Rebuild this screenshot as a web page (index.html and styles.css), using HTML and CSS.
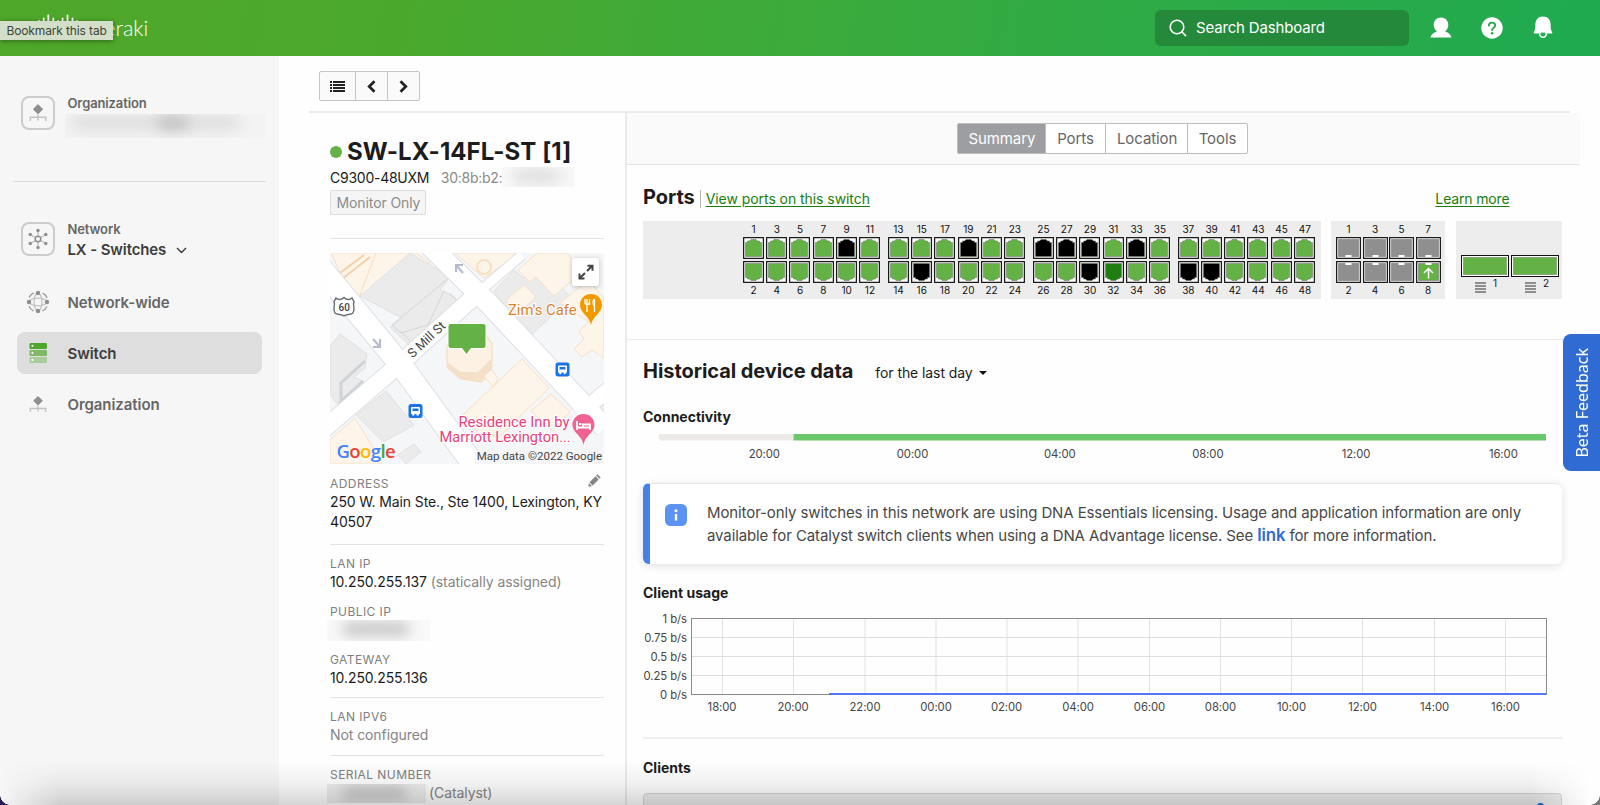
FILE: index.html
```html
<!DOCTYPE html>
<html lang="en">
<head>
<meta charset="utf-8">
<title>SW-LX-14FL-ST [1] - Meraki Dashboard</title>
<link rel="stylesheet" href="styles.css">
</head>
<body>
<header class="topbar">
  <div class="brand">
    <svg class="brand-mark" width="44" height="28" viewBox="0 0 44 28" stroke="#fff" stroke-width="1.8" stroke-linecap="round">
      <path d="M3 8v6M7.700 5.500v12M12.300 2.500v18M17.300 5.500v12M22 8v6M26.600 5.500v12M31.500 2.500v18M36.500 5.500v12M41 8v6"/>
    </svg>
    <span class="brand-name">meraki</span>
    <div class="tooltip">Bookmark this tab</div>
  </div>
  <div class="top-tools">
    <div class="search">
      <svg width="18" height="18" viewBox="0 0 18 18" fill="none" stroke="#fff" stroke-width="1.6" stroke-linecap="round"><circle cx="8" cy="8" r="6.800"/><path d="M13 13l3.600 3.600"/></svg>
      <span>Search Dashboard</span>
    </div>
    <svg class="user" width="22" height="21" viewBox="0 0 22 21" fill="#fff"><path d="M11 0.500c4.200 0 7.300 3.200 7.300 7.400 0 3-1.500 5.200-3.300 6.400 2.500 1 5.800 2.700 6.500 6.200H0.500c.7-3.500 4-5.200 6.500-6.200C5.200 13.100 3.700 10.900 3.700 7.900 3.700 3.700 6.800.5 11 .5z"/></svg>
    <svg class="help" width="22" height="22" viewBox="0 0 22 22"><circle cx="11" cy="11" r="10.700" fill="#fff"/><path d="M7.900 8.600c0-1.900 1.400-3 3.200-3s3.100 1.100 3.100 2.800c0 2.300-3.100 2.300-3.100 4.600" fill="none" stroke="#24aa4b" stroke-width="1.900" stroke-linecap="round"/><circle cx="11.100" cy="16.200" r="1.300" fill="#24aa4b"/></svg>
    <svg class="bell" width="20" height="23" viewBox="0 0 20 23"><path d="M10 .5c4.800 0 7.600 3.400 7.600 8.100 0 4.200.4 5.800 1.500 7.400.5.900.1 1.500-.8 1.500H1.700c-.9 0-1.300-.6-.8-1.500 1.100-1.600 1.500-3.200 1.500-7.400C2.400 3.900 5.200.5 10 .5z" fill="#fff"/><path d="M6.600 17.500a3.400 3.700 0 0 0 6.800 0" fill="none" stroke="#fff" stroke-width="1.600"/><path d="M8 17.200h4" stroke="#21aa4e" stroke-width="1.200"/></svg>
  </div>
</header>

<div class="body">
  <nav class="sidebar">
    <div class="scope scope-org">
      <div class="scope-icon">
        <svg width="18" height="18" viewBox="0 0 18 18"><path d="M9 .6l4.600 4.600L9 9.800 4.400 5.200z" fill="#8e8e8e" stroke="#8e8e8e" stroke-linejoin="round"/><path d="M9 10.500v6M1.300 17v-3.800h15.400V17" fill="none" stroke="#c4c4c4" stroke-width="1.500"/></svg>
      </div>
      <div class="scope-text"><div class="scope-label">Organization</div><div class="redact redact-org"><i></i><i></i></div></div>
    </div>
    <hr class="side-rule">
    <div class="scope scope-net">
      <div class="scope-icon">
        <svg width="22" height="22" viewBox="0 0 22 22"><path d="M11 11V2.500M11 11v8.500M11 11L3.200 6.500M11 11l7.800 4.500M11 11L3.200 15.500M11 11l7.800-4.500" stroke="#bdbdbd" stroke-width="1.200"/><circle cx="11" cy="11" r="2.800" fill="#f6f6f6" stroke="#8e8e8e" stroke-width="1.500"/><g fill="#8e8e8e"><circle cx="11" cy="2.500" r="1.700"/><circle cx="11" cy="19.500" r="1.700"/><circle cx="3.200" cy="6.500" r="1.700"/><circle cx="18.800" cy="15.500" r="1.700"/><circle cx="3.200" cy="15.500" r="1.700"/><circle cx="18.800" cy="6.500" r="1.700"/></g></svg>
      </div>
      <div class="scope-text"><div class="scope-label">Network</div><div class="scope-value"><span>LX - Switches</span><svg width="11" height="7" viewBox="0 0 11 7" fill="none" stroke="#333" stroke-width="1.300"><path d="M1 1l4.500 4.500L10 1"/></svg></div></div>
    </div>
    <ul class="menu">
      <li><svg width="24" height="24" viewBox="0 0 24 24" fill="none"><g stroke="#c4c4c4" stroke-width="1.300"><ellipse cx="12" cy="12" rx="4" ry="9"/><ellipse cx="12" cy="12" rx="9" ry="3.800"/></g><circle cx="12" cy="12" r="10" stroke="#999" stroke-width="1.300" stroke-dasharray="6.500 9.200" stroke-dashoffset="-4.600"/><g fill="#8e8e8e"><circle cx="12" cy="3" r="2.200"/><circle cx="12" cy="21" r="2.200"/><circle cx="3" cy="12" r="2.200"/><circle cx="21" cy="12" r="2.200"/></g></svg><span>Network-wide</span></li>
      <li class="active"><svg width="24" height="24" viewBox="0 0 24 24"><rect x="3.500" y="2" width="17.500" height="6" rx="1.200" fill="#4ea72a"/><rect x="3.500" y="9" width="17.500" height="6" rx="1.200" fill="#7fb968"/><rect x="3.500" y="16" width="17.500" height="6" rx="1.200" fill="#a9cc9b"/><g fill="#fff"><circle cx="6.500" cy="4.800" r="1.100"/><circle cx="6.500" cy="11.900" r="1.100"/><circle cx="6.500" cy="18.900" r="1.100"/></g></svg><span>Switch</span></li>
      <li><svg width="24" height="24" viewBox="0 0 24 24"><path d="M12 4.500l4.300 4.300-4.300 4.300-4.300-4.300z" fill="#8e8e8e" stroke="#8e8e8e" stroke-linejoin="round"/><path d="M12 13.500v6M4.300 20v-3.600h15.400V20" fill="none" stroke="#c4c4c4" stroke-width="1.500"/></svg><span>Organization</span></li>
    </ul>
  </nav>

  <main class="main">
    <div class="toolbar">
      <div class="btn-group">
        <button class="btn-list"><svg width="15" height="13" viewBox="0 0 15 13" fill="#222"><path d="M0 1h2v2H0zM0 4h2v2H0zM0 7h2v2H0zM0 10h2v2H0zM3 1h12v2H3zM3 4h12v2H3zM3 7h12v2H3zM3 10h12v2H3z"/></svg></button>
        <button><svg width="9" height="13" viewBox="0 0 9 13" fill="none" stroke="#222" stroke-width="2.700"><path d="M7.500 1.300L2.200 6.500l5.300 5.200"/></svg></button>
        <button><svg width="9" height="13" viewBox="0 0 9 13" fill="none" stroke="#222" stroke-width="2.700"><path d="M1.500 1.300l5.300 5.200-5.300 5.200"/></svg></button>
      </div>
    </div>
    <div class="columns">
      <aside class="device">
        <h1 class="device-name"><span class="status-dot"></span>SW-LX-14FL-ST [1]</h1>
        <div class="device-model"><span>C9300-48UXM</span><span class="mac">30:8b:b2:</span><span class="redact redact-mac"><i></i></span></div>
        <span class="badge">Monitor Only</span>
        <hr class="rule">
        <svg class="map" width="274" height="211" viewBox="0 0 274 211">
          <rect width="274" height="211" fill="#f5f6f7"/>
          <g stroke="#dfe1e4" stroke-width="1">
            <path d="M1 0L46 0 30 42 18 36z" fill="#fdf5ea" stroke="#f9dfc3"/>
            <path d="M46 0H86L100 10 30 42z" fill="#fdf5ea" stroke="#f9dfc3"/>
            <path d="M10 20L34 2M12 26L40 4" fill="none" stroke="#f5cfa8" stroke-width="2"/>
            <path d="M80 0L120 24 110 37 120 41 130 50 80 93 60 74 72 65 30 43z" fill="#ebebec"/>
            <path d="M120 24L62 72 71 80 98 72 114 38M120 41l12 10M70 78l10 10" fill="none" stroke="#d3d6d9"/>
            <path d="M92 0h66l2 6-7 18-16-7z" fill="#f5f6f7" stroke="none"/>
            <path d="M125 0h65l-36 25z" fill="#fdf5ea" stroke="#f9dfc3"/>
            <path d="M164 38L184 17l10 8 17-14 30 34-43 40z" fill="#ebebec"/>
            <path d="M176 47l18-15 12 12-18 17zM188 17l19-17h30l15 19-28 24-18-19-6 5z" fill="#fdf5ea" stroke="#f9dfc3"/>
            <path d="M230 50l28-23 16 18v60l-12-8-10 7-8-8 10-10-5-8 10-9z" fill="#fdf5ea" stroke="#f9dfc3"/>
            <path d="M0 93l10-12 27 20-2 14-11 9 9 4-1 10-23 15-9-11z" fill="#ebebec"/>
            <path d="M35 108L11 130v18M33 128L9 150" fill="none" stroke="#cfd3d8" stroke-width="3"/>
            <path d="M26 162l30-24 28 34-31 17z" fill="#ebebec"/>
            <path d="M0 187l25-22 28 46H0z" fill="#fdf5ea" stroke="#f9dfc3"/>
            <path d="M68 202l16-11 7 8-15 12z" fill="#ebebec"/>
            <path d="M132 163l60-57 27 29-50 49-20-4z" fill="#fdf5ea" stroke="#f9dfc3"/>
            <path d="M201 158l20-17 19 18-17 19z" fill="#fdf5ea" stroke="#f9dfc3"/>
            <path d="M117 92l14-16h21l10 15v23l-10 15-21-3-14-12z" fill="#fdf1e3" stroke="#f5d7b5"/>
            <path d="M118 110l13 9h17l13-13v10l-10 12-21-2-12-10z" fill="#f4dfc8" stroke="none"/>
            <path d="M154 123l8-7 6 10-5 8z" fill="#fdf5ea" stroke="#f9dfc3"/>
            <path d="M268 157l6-7v18z" fill="#fdf5ea" stroke="#f9dfc3"/>
          </g>
          <g fill="none" stroke="#fff">
            <path d="M-14 9L74 116l80 110" stroke="#dcdfe4" stroke-width="24"/>
            <path d="M93-14L160 52l115 123" stroke="#dcdfe4" stroke-width="22"/>
            <path d="M-12 181L72 109 148 40" stroke="#dcdfe4" stroke-width="19"/>
            <path d="M150 38L192 2" stroke="#dcdfe4" stroke-width="11"/>
            <path d="M248 162l36-30" stroke="#dcdfe4" stroke-width="17"/>
            <path d="M-14 9L74 116l80 110" stroke-width="22"/>
            <path d="M93-14L160 52l115 123" stroke-width="20"/>
            <path d="M-12 181L72 109 148 40" stroke-width="17"/>
            <path d="M150 38L192 2" stroke-width="9"/>
            <path d="M248 162l36-30" stroke-width="15"/>
          </g>
          <circle cx="154" cy="14" r="7" fill="#fdf5ea" stroke="#f9dfc3" stroke-width="2"/>
          <g fill="none" stroke="#b6bbd0" stroke-width="2.200"><path d="M133 20l-7-8M126 19v-7h7M43 86l7 8M43 94h7v-8"/></g>
          <path d="M6 45c2 2 6 2 8-.5 2 2.500 6 2.500 8 .5l2 4c-2 3 2 6-1 11-2 2-7 1-9 3-2-2-7-1-9-3-3-5 1-8-1-11z" fill="#fff" stroke="#666d73" stroke-width="1.400"/>
          <text x="8.500" y="58" class="map-route">60</text>
          <text class="map-street" transform="translate(82.500 105.500) rotate(-43)">S Mill St</text>
          <path d="M120.500 71h33a2 2 0 0 1 2 2v20a2 2 0 0 1-2 2h-12.500l-4.500 6-4.500-6h-11.500a2 2 0 0 1-2-2V73a2 2 0 0 1 2-2z" fill="#64b246" stroke="#fff" stroke-width="2" paint-order="stroke"/>
          <text x="178" y="62" class="map-poi poi-food">Zim's Cafe</text>
          <path d="M261 41c6.300 0 11 4.800 11 11 0 8-9.500 11-11 20-1.500-9-11-12-11-20 0-6.200 4.700-11 11-11z" fill="#f29900"/>
          <path d="M257 46v6m2.500-6v6m-4.500-6v4c0 2 4 2 4 0M257 52v7M264.500 46c-2 2-2 5 0 7v6m0-13v13" stroke="#fff" stroke-width="1.300" fill="none"/>
          <g id="bus"><rect x="225.500" y="109.500" width="14" height="14" rx="2.500" fill="#1a73e8"/><path d="M229 112.500h7q1 0 1 1v6h-9v-6q0-1 1-1z" fill="#fff"/><path d="M229.500 114h6v2.500h-6z" fill="#1a73e8"/><circle cx="230.300" cy="120" r="1.200" fill="#fff"/><circle cx="234.700" cy="120" r="1.200" fill="#fff"/></g>
          <use href="#bus" x="-147" y="41.500"/>
          <text x="128.500" y="174" class="map-poi poi-hotel">Residence Inn by</text>
          <text x="109.500" y="189" class="map-poi poi-hotel hotel-2">Marriott Lexington...</text>
          <path d="M253.500 161c6.300 0 11 4.800 11 11 0 8-9.500 10-11 20-1.500-10-11-12-11-20 0-6.200 4.700-11 11-11z" fill="#f06292"/>
          <path d="M247 168v9m0-2.500h13m0 2.500v-5.500h-7v3m-4-3.500h2.500" stroke="#fff" stroke-width="1.800" fill="none"/>
          <rect x="145" y="197" width="129" height="14" fill="#f5f5f5" opacity=".8"/>
          <text x="272" y="207" class="map-credit">Map data ©2022 Google</text>
          <text x="6.500" y="205" class="map-google"><tspan fill="#4285f4">G</tspan><tspan fill="#ea4335">o</tspan><tspan fill="#fbbc05">o</tspan><tspan fill="#4285f4">g</tspan><tspan fill="#34a853">l</tspan><tspan fill="#ea4335">e</tspan></text>
          <rect x="242" y="5" width="27" height="28" rx="3" fill="#fff" class="map-expand"/>
          <path d="M250 25l5-5M257 18l5-5M257.500 12.800h5v5M249.500 20.500v5h5" fill="none" stroke="#444" stroke-width="2"/>
        </svg>

        <div class="field address"><div class="label-row"><span class="label">ADDRESS</span><svg width="13" height="13" viewBox="0 0 13 13" fill="#858585"><path d="M9.500.3l3.200 3.200-1.300 1.300-3.200-3.200zM7.500 2.300l3.200 3.200-6 6-3.200-3.200zM.9 9l3.100 3.100-3.600.7z"/></svg></div><div class="value">250 W. Main Ste., Ste 1400, Lexington, KY<br>40507</div></div>
        <hr class="rule">
        <div class="field"><div class="label">LAN IP</div><div class="value">10.250.255.137 <span class="muted">(statically assigned)</span></div></div>
        <div class="field"><div class="label">PUBLIC IP</div><div class="redact redact-ip"><i></i></div></div>
        <div class="field gateway"><div class="label">GATEWAY</div><div class="value">10.250.255.136</div></div>
        <hr class="rule">
        <div class="field ipv6"><div class="label">LAN IPV6</div><div class="value muted">Not configured</div></div>
        <hr class="rule">
        <div class="field"><div class="label">SERIAL NUMBER</div><div class="value muted"><span class="redact redact-serial"><i></i></span>(Catalyst)</div></div>
      </aside>

      <section class="detail">
        <div class="tabs-row"><div class="tabs"><a class="on">Summary</a><a>Ports</a><a>Location</a><a>Tools</a></div></div>
        <div class="ports">
          <div class="ports-head"><h2>Ports</h2><a class="link view-ports"><u>View ports on this switch</u></a><a class="link learn"><u>Learn more</u></a></div>
          <div class="panels">
            <div class="panel panel-main" id="copper"></div>
            <div class="panel panel-sfp" id="sfp"></div>
            <div class="panel panel-stack">
              <div class="stack-port"><b></b><div><i></i><span>1</span></div></div>
              <div class="stack-port"><b></b><div><i></i><span>2</span></div></div>
            </div>
          </div>
        </div>
        <div class="history">
          <div class="history-head"><h2>Historical device data</h2><span>for the last day</span><i class="caret"></i></div>
          <h3>Connectivity</h3>
          <svg class="connectivity" width="919" height="40" viewBox="643 426 919 40">
            <rect x="659" y="434" width="134.500" height="6.500" fill="#ede9e9"/><rect x="793.500" y="434" width="752.500" height="6.500" fill="#6bc76b"/>
            <g class="tick"><text x="764.300" y="457.500">20:00</text><text x="912.500" y="457.500">00:00</text><text x="1059.800" y="457.500">04:00</text><text x="1207.800" y="457.500">08:00</text><text x="1356" y="457.500">12:00</text><text x="1503.300" y="457.500">16:00</text></g>
          </svg>
          <div class="notice">
            <svg width="22" height="22" viewBox="0 0 22 22"><rect width="22" height="22" rx="5.500" fill="#5b93f2"/><circle cx="11" cy="6.700" r="1.500" fill="#fff"/><path d="M11 10v6.500" stroke="#fff" stroke-width="2.400"/></svg>
            <p>Monitor-only switches in this network are using DNA Essentials licensing. Usage and application information are only<br>available for Catalyst switch clients when using a DNA Advantage license. See <a>link</a> for more information.</p>
          </div>
          <h3 class="usage-title">Client usage</h3>
          <svg class="usage" width="919" height="116" viewBox="643 606 919 116">
            <path d="M722.500 619v76M793.500 619v76M865 619v76M936 619v76M1007 619v76M1078 619v76M1149.500 619v76M1220.500 619v76M1291.500 619v76M1362.500 619v76M1434.500 619v76M1505.500 619v76" stroke="#e2e2e2"/>
            <path d="M692 637.500h855M692 656.500h855M692 675.500h855" stroke="#dedede"/>
            <rect x="691.500" y="618.500" width="855" height="76" fill="none" stroke="#8b8b8b"/>
            <path d="M829 694h717" stroke="#5575f5" stroke-width="2"/>
            <g class="tick end"><text x="687" y="623.300">1 b/s</text><text x="687" y="641.500">0.75 b/s</text><text x="687" y="660.500">0.5 b/s</text><text x="687" y="679.500">0.25 b/s</text><text x="687" y="698.500">0 b/s</text></g>
            <g class="tick"><text x="722" y="711.300">18:00</text><text x="793" y="711.300">20:00</text><text x="865" y="711.300">22:00</text><text x="936" y="711.300">00:00</text><text x="1006.500" y="711.300">02:00</text><text x="1078" y="711.300">04:00</text><text x="1149.500" y="711.300">06:00</text><text x="1220.500" y="711.300">08:00</text><text x="1291.500" y="711.300">10:00</text><text x="1362.500" y="711.300">12:00</text><text x="1434.500" y="711.300">14:00</text><text x="1505.500" y="711.300">16:00</text></g>
          </svg>
          <hr class="rule usage-rule">
          <h3 class="clients-title">Clients</h3>
          <div class="clients-panel"><i></i></div>
        </div>
      </section>
    </div>
  </main>
</div>
<div class="feedback"><span>Beta Feedback</span></div>
<div class="bottom-shade"></div>
<div class="corner corner-left"></div>
<div class="corner corner-right"></div>
<script src="script.js"></script>
</body>
</html>
```

FILE: styles.css
```css
* { box-sizing: border-box; }
body { margin: 0; width: 1600px; height: 805px; overflow: hidden; position: relative; background: #fefefe; color: #1c1c1c; font: 14px/20px Inter, sans-serif; letter-spacing: -.06px; }
h1, h2, h3, p, ul { margin: 0; padding: 0; }
svg { display: block; flex: none; }
hr { border: 0; margin: 0; }

.topbar { height: 56px; display: flex; justify-content: space-between; background: linear-gradient(100deg, #50a72a 0%, #4aa92d 25%, #2fab46 70%, #1faa50 100%); }
.brand { position: relative; display: flex; padding: 13px 0 0 36px; gap: 7px; }
.brand-name { color: #fff; font: 300 21.500px/30px Lato, sans-serif; letter-spacing: 0; }
.tooltip { position: absolute; left: 0; top: 21px; width: 113px; height: 19px; padding-left: 6.500px; background: #d3dfc8; color: #3b4437; font-size: 12px; line-height: 19px; white-space: nowrap; box-shadow: 0 1px 5px rgba(0,0,0,.4); letter-spacing: -.13px; }
.top-tools { display: flex; align-items: center; height: 55px; }
.search { width: 254px; height: 36px; margin-right: 21px; padding-left: 14px; display: flex; align-items: center; gap: 9px; border-radius: 6px; background: #24893b; color: #fff; font-size: 15px; letter-spacing: -.16px; }
.user { margin-right: 29px; }
.help { margin-right: 30px; }
.bell { margin-right: 47px; }

.body { display: flex; height: 749px; }
.sidebar { width: 279px; flex: none; background: #f6f6f6; color: #666; padding-top: 40px; }
.scope { display: flex; padding-left: 21px; height: 34px; gap: 12.500px; letter-spacing: -.12px; }
.scope-icon { width: 34px; height: 34px; border: 2px solid #ccc; border-radius: 8px; display: flex; align-items: center; justify-content: center; flex: none; }
.scope-label { font-size: 13px; line-height: 16px; font-weight: 600; margin-top: -1px; }
.scope-value { display: flex; align-items: center; gap: 10px; margin-top: 4px; font-size: 15px; font-weight: 600; line-height: 18px; color: #3d3d3d; }
.side-rule { margin: 51px 13px 40px 13px; height: 1px; background: #dcdcdc; }
.menu { list-style: none; padding: 25px 17px 0; display: flex; flex-direction: column; gap: 9px; }
.menu li { height: 42px; border-radius: 8px; display: flex; align-items: center; gap: 17.500px; padding-left: 9px; font-size: 15px; font-weight: 600; letter-spacing: -.07px; }
.menu span { padding-top: 1px; }
.menu .active { background: #dedede; color: #3d3d3d; }

.redact { position: relative; display: block; overflow: hidden; background: #f9f9f9; }
.redact i { position: absolute; left: 15%; width: 66%; top: 3px; height: 12px; border-radius: 8px; background: #bebebe; filter: blur(7px); }
.redact-org { width: 200px; height: 24px; margin: 3px 0 0 -3px; background: #f3f3f3; }
.redact-org i { left: 6px; width: 168px; background: #dadada; }
.redact-org i + i { left: 92px; width: 32px; background: #bdbdbd; }

.main { flex: 1; padding-left: 30px; }
.toolbar { width: 1261px; height: 57px; padding: 15px 0 0 10px; border-bottom: 2px solid #ebebeb; }
.btn-group { display: flex; width: 101px; height: 30px; border: 1px solid #c4c4c4; border-radius: 2px; background: #fafafa; }
.btn-group button { width: 32px; border: 0; border-left: 1px solid #c4c4c4; padding: 0; background: none; display: flex; align-items: center; justify-content: center; }
.btn-group .btn-list { width: 35px; border-left: 0; }
.columns { display: flex; height: 692px; }
.device { width: 318px; flex: none; border-right: 2px solid #ebebeb; padding: 22px 21px 0; }
.device-name { display: flex; align-items: center; gap: 5px; height: 33px; font-size: 24px; line-height: 34px; font-weight: 700; white-space: nowrap; letter-spacing: .08px; }
.status-dot { width: 12px; height: 12px; border-radius: 50%; background: #64b246; flex: none; }
.device-model { display: flex; height: 20px; white-space: nowrap; letter-spacing: -.25px; }
.mac { margin-left: 11.500px; color: #8a8a8a; }
.redact-mac { width: 72px; height: 20px; margin-top: -1px; background: #f8f8f8; }
.redact-mac i { background: #dadada; }
.badge { display: block; width: 96px; height: 25px; margin-top: 2px; padding-left: 5.500px; border: 1px solid #ddd; border-radius: 2px; background: #f5f5f5; color: #8c8c8c; line-height: 23px; white-space: nowrap; letter-spacing: -.1px; }
.rule { height: 1px; background: #e2e2e2; }
.badge + .rule { margin: 23px 0 14px; }
.map { margin-bottom: 10px; letter-spacing: 0; }
.map text { font-family: Roboto, sans-serif; }
.map-expand { filter: drop-shadow(0 1px 2px rgba(0,0,0,.25)); }
.map .map-route { font-size: 10px; font-weight: 500; fill: #444; }
.map .map-street { font-size: 12.800px; fill: #444; stroke: #fff; stroke-width: 2px; paint-order: stroke; }
.map .map-poi { font-size: 14.800px; stroke: #fff; stroke-width: 2px; paint-order: stroke; }
.map .hotel-2 { font-size: 14.650px; }
.poi-food { fill: #d9822b; }
.poi-hotel { fill: #ea3f7c; }
.map .map-credit { font-size: 11.500px; fill: #444; text-anchor: end; }
.map .map-google { font: 600 18.500px "Open Sans", sans-serif; letter-spacing: -.6px; }
.label-row { display: flex; justify-content: space-between; padding-right: 3px; }
.label { font-size: 12px; line-height: 20px; height: 18px; letter-spacing: .43px; color: #808080; }
.value { line-height: 20px; letter-spacing: -.08px; white-space: nowrap; }
.muted { color: #858585; }
.field { height: 48px; }
.field.address { height: 70px; }
.address .value { letter-spacing: -.13px; }
.address + .rule, .gateway + .rule, .ipv6 + .rule { margin-bottom: 9px; }
.field.gateway { height: 47px; }
.redact-ip { width: 103px; height: 21px; margin-left: -3px; }
.redact-serial { display: inline-block; vertical-align: top; width: 99px; height: 19px; margin: 1px 3px 0 -3px; background: #eee; }

.detail { width: 953px; }
.tabs-row { height: 52px; padding-top: 10px; background: #fafafa; border-bottom: 1px solid #e4e4e4; display: flex; justify-content: center; padding-right: 3px; }
.tabs { display: flex; width: 291px; height: 31px; border: 1px solid #bdbdbd; border-radius: 2px; background: #fff; font-size: 15px; color: #666; line-height: 30px; letter-spacing: -.1px; }
.tabs a { padding-left: 11px; border-left: 1px solid #bdbdbd; width: 82px; }
.tabs a:nth-child(1) { width: 88px; background: #9c9ea1; color: #fff; border: 0; }
.tabs a:nth-child(2) { width: 60px; }
.tabs a:nth-child(4) { width: 60px; }
h2 { font-size: 20px; line-height: 26px; font-weight: 700; }
h3 { font-size: 14px; line-height: 20px; font-weight: 700; letter-spacing: 0; }
.ports { height: 175px; width: 936px; padding: 19px 0 0 16px; border-bottom: 1px solid #ebebeb; }
.ports-head { display: flex; align-items: flex-end; height: 26px; }
.link { color: #187f0e; margin-bottom: 2px; line-height: 18px; }
.link u { text-underline-offset: 2px; }
.view-ports { margin-left: 5px; padding-left: 5px; border-left: 1px solid #b5b5b5; }
.learn { margin-left: auto; margin-right: 53.500px; letter-spacing: -.15px; }
.panels { display: flex; margin-top: 11px; }
.panel { height: 78px; background: #ededed; display: flex; letter-spacing: 0; }
.panel-main { width: 678px; padding-left: 99.700px; gap: 5.200px; margin-right: 10px; }
.port-group { display: grid; grid-template: 16px 24px 24px 14px / repeat(6, 23.300px); grid-auto-flow: column; }
.panel-sfp { width: 114px; margin-right: 11px; padding-left: 5px; }
.panel-sfp .port-group { grid-template-columns: repeat(4, 26.500px); }
.port-num { font-size: 10px; line-height: 17px; text-align: center; color: #111; width: 21.500px; }
.panel-sfp .port-num { width: 25px; }
.port-num.low { line-height: 10px; }
.panel-stack { width: 106px; padding: 34px 0 0 5px; gap: 2px; }
.stack-port b { display: block; width: 48px; height: 22px; background: #64b246; border: 1px solid #111; box-shadow: inset 0 0 0 1px #fff, inset 0 0 0 2px #8aa87c; }
.stack-port div { display: flex; padding: 5px 0 0 14px; gap: 7px; }
.stack-port i { width: 11px; height: 11px; background: repeating-linear-gradient(#8e8e8e 0 2px, #ededed 2px 3px); }
.stack-port span { font-size: 10px; line-height: 10px; margin-top: -4px; }

.history { padding-left: 16px; }
.history-head { display: flex; height: 26px; margin-top: 18px; align-items: center; }
.history-head span { margin: 3px 6px 0 22px; letter-spacing: -.08px; }
.caret { border: 4px solid transparent; border-top-color: #111; border-bottom: 0; margin-top: 4px; }
.history-head + h3 { margin-top: 23px; height: 20px; }
.connectivity { margin-top: -1px; }
.tick { font: 11.300px Inter, sans-serif; fill: #444; text-anchor: middle; }
.tick.end { text-anchor: end; }
.notice { width: 919px; height: 81px; margin-top: 17px; display: flex; padding: 20px 0 0 15px; border-left: 7px solid #4681e8; border-top: 1px solid #e6e6e6; border-radius: 6px; background: #fff; box-shadow: 0 2px 8px rgba(0,0,0,.12); }
.notice p { margin: -2px 0 0 20px; font-size: 15px; line-height: 22.500px; letter-spacing: -.11px; color: #484848; white-space: nowrap; }
.notice a { color: #2f6bd3; font-size: 16.800px; font-weight: 600; line-height: 16px; }
.usage-title { margin-top: 19px; }
.usage { margin-top: 3px; }
.usage-rule { width: 919px; margin-top: 15px; height: 2px; background: #efefef; }
.clients-title { margin-top: 19px; }
.clients-panel { width: 919px; height: 40px; margin-top: 15px; border: 1px solid #d5d5d5; border-radius: 4px; background: #ececec; position: relative; }
.clients-panel i { position: absolute; left: 892px; top: 9px; width: 9px; height: 9px; border: 2px solid transparent; border-top-color: #0d6cd0; border-radius: 50%; }

.feedback { position: absolute; right: 0; top: 334px; width: 37px; height: 137px; border-radius: 8px 0 0 8px; background: #2f6bd3; color: #fff; display: flex; align-items: center; justify-content: center; }
.feedback span { writing-mode: vertical-rl; transform: rotate(180deg); font: 16px/18px "Noto Sans", sans-serif; letter-spacing: 0; white-space: nowrap; }
.bottom-shade { position: absolute; left: 0; right: 0; bottom: 0; height: 44px; background: linear-gradient(rgba(0,0,0,0), rgba(0,0,0,.05) 50%, rgba(0,0,0,.16)); -webkit-mask: linear-gradient(90deg, transparent, #000 60px, #000 1530px, transparent 1590px); }
.corner { position: absolute; bottom: 0; width: 10px; height: 10px; }
.corner-left { left: 0; background: radial-gradient(circle at 100% 0, transparent 9.500px, #2a1b52 10px); }
.corner-right { right: 0; background: radial-gradient(circle at 0 0, transparent 9.500px, #777 10px); }
```

FILE: script.js
```js
const GREEN = "#64b246";
const DARK_GREEN = "#1f7d12";
const IDLE = "#000";
const DISABLED = "#8f8f8f";
const idlePorts = new Set([9, 16, 19, 25, 27, 29, 30, 33, 38, 40]);

function copperPort(n) {
  const color = n === 32 ? DARK_GREEN : idlePorts.has(n) ? IDLE : GREEN;
  const flip = n % 2 ? "" : ' transform="rotate(180 10.500 11)"';
  return `<svg width="21" height="22" viewBox="0 0 21 22"><rect x=".65" y=".65" width="19.700" height="20.700" fill="#fff" stroke="#111" stroke-width="1.200"/>
    <g${flip}><path d="M2.500 19.500V5.500H4.500V4H6.500L8 2.500H13L14.500 4H16.500V5.500H18.500V19.500z" fill="${color}" stroke="#667060" stroke-opacity=".5"/></g></svg>`;
}

function sfpPort(n) {
  const up = n === 8;
  const notch = n % 2 ? 18 : 2;
  const arrow = up ? '<path d="M12.500 17.500V8M8 12l4.500-4.500L17 12" fill="none" stroke="#fff" stroke-width="1.500"/>' : "";
  return `<svg width="25" height="22" viewBox="0 0 25 22"><rect x=".65" y=".65" width="23.700" height="20.700" fill="#fff" stroke="#111" stroke-width="1.200"/>
    <rect x="2.500" y="2.500" width="20" height="17" fill="${up ? GREEN : DISABLED}" stroke="#777" stroke-opacity=".6"/>
    <rect x="9.500" y="${notch}" width="6" height="2" fill="#fff"/>${arrow}</svg>`;
}

function group(first, last, draw) {
  let html = '<div class="port-group">';
  for (let n = first; n < last; n += 2) {
    html += `<span class="port-num">${n}</span>${draw(n)}${draw(n + 1)}<span class="port-num low">${n + 1}</span>`;
  }
  return html + "</div>";
}

document.getElementById("copper").innerHTML = [1, 13, 25, 37].map(n => group(n, n + 12, copperPort)).join("");
document.getElementById("sfp").innerHTML = group(1, 9, sfpPort);
```
